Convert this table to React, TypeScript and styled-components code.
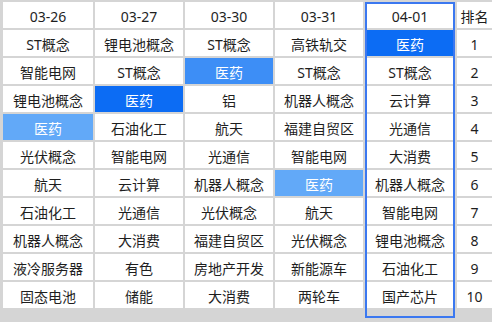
import React from 'react'
import styled, { createGlobalStyle } from 'styled-components'

type Level = 'none' | 'dark' | 'mid' | 'light'

type Cell = {
    name: string
    level?: Level
}

const DATES = ['03-26', '03-27', '03-30', '03-31', '04-01']

const ROWS: Cell[][] = [
    [{ name: 'ST概念' }, { name: '锂电池概念' }, { name: 'ST概念' }, { name: '高铁轨交' }, { name: '医药', level: 'dark' }],
    [{ name: '智能电网' }, { name: 'ST概念' }, { name: '医药', level: 'mid' }, { name: 'ST概念' }, { name: 'ST概念' }],
    [{ name: '锂电池概念' }, { name: '医药', level: 'dark' }, { name: '铝' }, { name: '机器人概念' }, { name: '云计算' }],
    [{ name: '医药', level: 'light' }, { name: '石油化工' }, { name: '航天' }, { name: '福建自贸区' }, { name: '光通信' }],
    [{ name: '光伏概念' }, { name: '智能电网' }, { name: '光通信' }, { name: '智能电网' }, { name: '大消费' }],
    [{ name: '航天' }, { name: '云计算' }, { name: '机器人概念' }, { name: '医药', level: 'light' }, { name: '机器人概念' }],
    [{ name: '石油化工' }, { name: '光通信' }, { name: '光伏概念' }, { name: '航天' }, { name: '智能电网' }],
    [{ name: '机器人概念' }, { name: '大消费' }, { name: '福建自贸区' }, { name: '光伏概念' }, { name: '锂电池概念' }],
    [{ name: '液冷服务器' }, { name: '有色' }, { name: '房地产开发' }, { name: '新能源车' }, { name: '石油化工' }],
    [{ name: '固态电池' }, { name: '储能' }, { name: '大消费' }, { name: '两轮车' }, { name: '国产芯片' }],
]

const BG: Record<Level, string> = {
    none: '#ffffff',
    dark: '#0c6cf4',
    mid: '#3d8ef6',
    light: '#62a9f8',
}

export default function App() {
    return (
        <>
            <GlobalStyle />
            <Board>
                <Grid>
                    {DATES.map((d) => (
                        <Cell key={d}>{d}</Cell>
                    ))}
                    <Cell>排名</Cell>
                    {ROWS.map((row, i) => (
                        <React.Fragment key={i}>
                            {row.map((c, j) => (
                                <Cell key={j} level={c.level ?? 'none'}>
                                    {c.name}
                                </Cell>
                            ))}
                            <Cell>{i + 1}</Cell>
                        </React.Fragment>
                    ))}
                </Grid>
                <TodayFrame />
            </Board>
        </>
    )
}

const GlobalStyle = createGlobalStyle`
    html, body {
        margin: 0;
        padding: 0;
        background: #d5d5d5;
        overflow: hidden;
    }
    body {
        font-family: "Noto Sans", "Noto Sans CJK SC", sans-serif;
    }
`

const Board = styled.div`
    position: relative;
    width: 492px;
    height: 322px;
`

const Grid = styled.div`
    display: grid;
    grid-template-columns: 90px 88px 88px 88px 90px 35px;
    grid-auto-rows: 26px;
    gap: 2px;
    padding: 2px 0 0 3px;
`

const Cell = styled.div<{ level?: Level }>`
    display: flex;
    align-items: center;
    justify-content: center;
    padding-top: 2px;
    background: ${(p) => BG[p.level ?? 'none']};
    color: ${(p) => (p.level && p.level !== 'none' ? '#ffffff' : '#1e1e1e')};
    font-size: 14px;
    white-space: nowrap;
    overflow: hidden;
`

const TodayFrame = styled.div`
    position: absolute;
    left: 365px;
    top: 2px;
    width: 90px;
    height: 316px;
    box-sizing: border-box;
    border: 2px solid #3b78f0;
    pointer-events: none;
`
